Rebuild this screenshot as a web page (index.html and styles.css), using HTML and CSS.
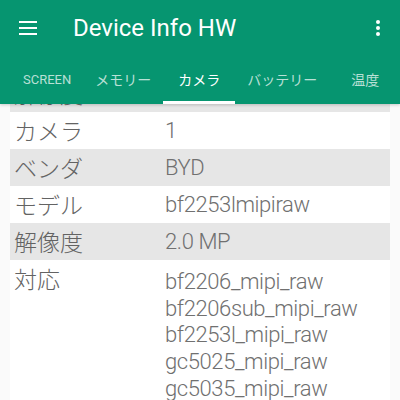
FILE: index.html
```html
<!DOCTYPE html>
<html>
<head>
<meta charset="utf-8">
<link rel="stylesheet" href="styles.css">
</head>
<body>
<div class="app">
  <header class="appbar">
    <div class="toolbar">
      <svg class="menu" width="18" height="14" viewBox="0 0 18 14">
        <rect x="0" y="0" width="18" height="2" fill="#fff"/>
        <rect x="0" y="6" width="18" height="2" fill="#fff"/>
        <rect x="0" y="12" width="18" height="2" fill="#fff"/>
      </svg>
      <h1 class="title">Device Info HW</h1>
      <svg class="more" width="4" height="16" viewBox="0 0 4 16">
        <circle cx="2" cy="2" r="2" fill="#fff"/>
        <circle cx="2" cy="8" r="2" fill="#fff"/>
        <circle cx="2" cy="14" r="2" fill="#fff"/>
      </svg>
    </div>
    <nav class="tabs">
      <div class="tab">SCREEN</div>
      <div class="tab">メモリー</div>
      <div class="tab active">カメラ</div>
      <div class="tab">バッテリー</div>
      <div class="tab">温度</div>
    </nav>
  </header>
  <main class="scroller">
    <div class="list">
      <div class="row gray"><div class="label">解像度</div><div class="value">2.0 MP</div></div>
      <div class="row"><div class="label">カメラ</div><div class="value">1</div></div>
      <div class="row gray"><div class="label">ベンダ</div><div class="value">BYD</div></div>
      <div class="row"><div class="label">モデル</div><div class="value">bf2253lmipiraw</div></div>
      <div class="row gray"><div class="label">解像度</div><div class="value">2.0 MP</div></div>
      <div class="row multi"><div class="label">対応</div><div class="value">bf2206_mipi_raw<br>bf2206sub_mipi_raw<br>bf2253l_mipi_raw<br>gc5025_mipi_raw<br>gc5035_mipi_raw<br>gc5035sub_mipi_raw</div></div>
    </div>
  </main>
</div>
</body>
</html>
```

FILE: styles.css
```css
* { box-sizing: border-box; }
html, body {
  margin: 0;
  padding: 0;
  width: 400px;
  height: 400px;
  overflow: hidden;
  background: #fafafa;
  font-family: Roboto, "Noto Sans CJK JP", sans-serif;
}
.app {
  position: relative;
  width: 400px;
  height: 400px;
  overflow: hidden;
}
.appbar {
  position: relative;
  z-index: 2;
  background: #069570;
  color: #fff;
  height: 104px;
  box-shadow: 0 1px 3px rgba(0,0,0,0.2);
}
.toolbar {
  height: 56px;
  display: flex;
  align-items: center;
  padding: 0 20px 0 19px;
}
.menu { flex: none; }
.title {
  margin: 0 0 0 36px;
  flex: 1;
  font-family: Roboto, sans-serif;
  font-weight: 400;
  font-size: 24px;
  letter-spacing: 0;
  line-height: 1;
}
.more { flex: none; }
.tabs {
  height: 48px;
  display: flex;
  padding-left: 11px;
  white-space: nowrap;
}
.tab {
  position: relative;
  flex: none;
  min-width: 72px;
  padding: 0 12px;
  display: flex;
  align-items: center;
  justify-content: center;
  font-family: Roboto, "Noto Sans CJK JP", sans-serif;
  font-size: 14px;
  line-height: 20px;
  color: rgba(255,255,255,0.72);
}
.tab:first-child { font-size: 13px; }
.tab.active { color: #fff; }
.tab.active::after {
  content: "";
  position: absolute;
  left: 0;
  right: 0;
  bottom: 0;
  height: 3px;
  background: #fff;
}
.scroller {
  height: 296px;
  overflow: hidden;
  padding: 0 10px;
}
.list {
  margin-top: -29px;
  background: #fff;
}
.row {
  display: flex;
  height: 37px;
  align-items: center;
}
.row.gray { background: #e6e6e6; }
.label {
  width: 155px;
  flex: none;
  padding-left: 4px;
  font-family: "Noto Sans CJK JP", sans-serif;
  font-weight: 300;
  font-size: 23px;
  color: #636363;
  line-height: 37px;
}
.value {
  font-family: "Roboto Light", Roboto, sans-serif;
  font-weight: 300;
  font-size: 22px;
  letter-spacing: -0.4px;
  color: #707070;
  line-height: 37px;
}
.row.multi {
  height: auto;
  align-items: flex-start;
}
.row.multi .value {
  line-height: 26.7px;
  padding-top: 9px;
}
```
